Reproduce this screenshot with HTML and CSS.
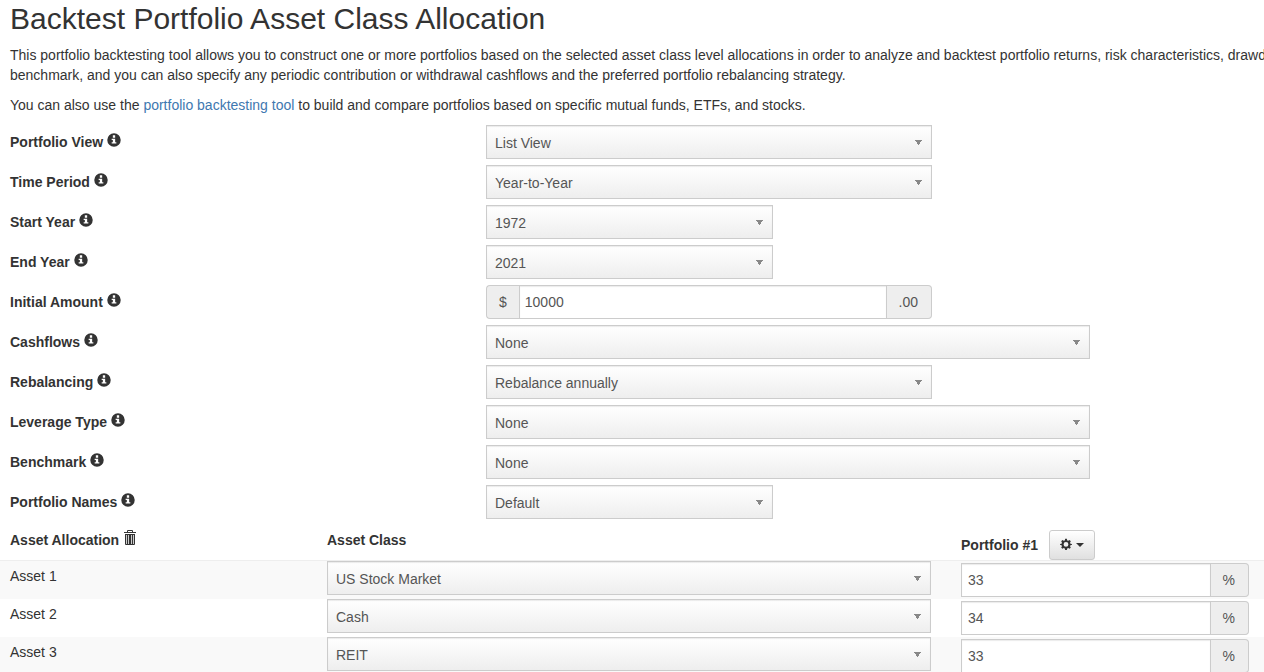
FILE: index.html
```html
<!DOCTYPE html>
<html lang="en">
<head>
<meta charset="utf-8">
<meta name="viewport" content="width=device-width, initial-scale=1">
<title>Backtest Portfolio Asset Class Allocation</title>
<link rel="stylesheet" href="styles.css">
</head>
<body>
<svg class="sprite" aria-hidden="true">
  <symbol id="info" viewBox="0 0 1200 1200">
    <path fill-rule="evenodd" d="M600 23a577 577 0 1 0 0 1154a577 577 0 1 0 0-1154zM500 200h200v200h-200zM400 500h300v300h100v100h-400v-100h100v-200h-100z"/>
  </symbol>
  <symbol id="trash" viewBox="0 0 14 16">
    <path fill-rule="evenodd" d="M4 2V1q0-1 1-1h4q1 0 1 1v1h3v1H1V2zM5 1v1h4V1zM2 4h10v10q0 1-1 1H3q-1 0-1-1z"/>
    <path class="slats" d="M3 5h1v9H3zM5 5h1v9H5zM8 5h1v9H8zM10 5h1v9h-1z"/>
  </symbol>
  <symbol id="gear" viewBox="0 0 14 14">
    <path fill-rule="evenodd" d="M6 1h2l.4 1.800 1.200.5L11.200 2.400l1.400 1.400-.9 1.600.5 1.200L14 7v1l-1.800.4-.5 1.200.9 1.600-1.400 1.400-1.600-.9-1.200.5L8 14H6l-.4-1.800-1.200-.5-1.600.9-1.400-1.400.9-1.600-.5-1.200L0 8V7l1.800-.4.5-1.200-.9-1.600L2.800 2.400l1.600.9 1.200-.5zM7 4.700a2.800 2.800 0 1 0 0 5.600a2.800 2.800 0 1 0 0-5.600z"/>
  </symbol>
</svg>
<main class="page">
  <h1 class="title">Backtest Portfolio Asset Class Allocation</h1>
  <p class="intro">This portfolio backtesting tool allows you to construct one or more portfolios based on the selected asset class level allocations in order to analyze and backtest portfolio returns, risk characteristics, drawd<br>benchmark, and you can also specify any periodic contribution or withdrawal cashflows and the preferred portfolio rebalancing strategy.</p>
  <p class="intro">You can also use the <a href="#">portfolio backtesting tool</a> to build and compare portfolios based on specific mutual funds, ETFs, and stocks.</p>
  <form>
    <div class="row"><label class="name" for="view">Portfolio View <svg class="icon"><use href="#info"/></svg></label><select class="select medium" id="view"><option>List View</option></select></div>
    <div class="row"><label class="name" for="period">Time Period <svg class="icon"><use href="#info"/></svg></label><select class="select medium" id="period"><option>Year-to-Year</option></select></div>
    <div class="row"><label class="name" for="start">Start Year <svg class="icon"><use href="#info"/></svg></label><select class="select" id="start"><option>1972</option></select></div>
    <div class="row"><label class="name" for="end">End Year <svg class="icon"><use href="#info"/></svg></label><select class="select" id="end"><option>2021</option></select></div>
    <div class="row"><label class="name" for="amount">Initial Amount <svg class="icon"><use href="#info"/></svg></label><div class="group medium"><span class="addon lead">$</span><input class="field" id="amount" type="text" value="10000"><span class="addon">.00</span></div></div>
    <div class="row"><label class="name" for="cash">Cashflows <svg class="icon"><use href="#info"/></svg></label><select class="select wide" id="cash"><option>None</option></select></div>
    <div class="row"><label class="name" for="rebalance">Rebalancing <svg class="icon"><use href="#info"/></svg></label><select class="select medium" id="rebalance"><option>Rebalance annually</option></select></div>
    <div class="row"><label class="name" for="leverage">Leverage Type <svg class="icon"><use href="#info"/></svg></label><select class="select wide" id="leverage"><option>None</option></select></div>
    <div class="row"><label class="name" for="benchmark">Benchmark <svg class="icon"><use href="#info"/></svg></label><select class="select wide" id="benchmark"><option>None</option></select></div>
    <div class="row"><label class="name" for="names">Portfolio Names <svg class="icon"><use href="#info"/></svg></label><select class="select" id="names"><option>Default</option></select></div>
    <table class="assets">
      <colgroup><col class="col-name"><col class="col-class"><col></colgroup>
      <thead>
        <tr><th>Asset Allocation <svg class="icon trash"><use href="#trash"/></svg></th><th>Asset Class</th><th><div class="portfolio">Portfolio #1 <button class="menu" type="button" aria-label="Portfolio actions"><svg class="gear"><use href="#gear"/></svg><span class="caret"></span></button></div></th></tr>
      </thead>
      <tbody>
        <tr><td><label for="class1">Asset 1</label></td><td><select class="select" id="class1"><option>US Stock Market</option></select></td><td><div class="group share"><input class="field" type="text" value="33" aria-label="Asset 1 allocation"><span class="addon">%</span></div></td></tr>
        <tr><td><label for="class2">Asset 2</label></td><td><select class="select" id="class2"><option>Cash</option></select></td><td><div class="group share"><input class="field" type="text" value="34" aria-label="Asset 2 allocation"><span class="addon">%</span></div></td></tr>
        <tr><td><label for="class3">Asset 3</label></td><td><select class="select" id="class3"><option>REIT</option></select></td><td><div class="group share"><input class="field" type="text" value="33" aria-label="Asset 3 allocation"><span class="addon">%</span></div></td></tr>
      </tbody>
    </table>
  </form>
</main>
</body>
</html>
```
FILE: styles.css
```css
* {
  box-sizing: border-box;
}

html {
  height: 100%;
  overflow: hidden;
}

body {
  margin: 0;
  color: #333;
  background: #fff;
  font: 14px/20px "Liberation Sans", Arial, sans-serif;
}

.sprite {
  display: none;
}

.page {
  padding-top: 2px;
  overflow: hidden;
}

.title {
  margin: 0 10px 10px;
  font-size: 30px;
  font-weight: 400;
  line-height: 33px;
}

.intro {
  margin: 0 0 10px 10px;
  white-space: nowrap;
}

a {
  color: #4078b0;
  text-decoration: none;
}

.row {
  display: grid;
  grid-template-columns: 476fr 287fr 159fr 158fr 174fr;
  align-items: start;
  margin: 0 0 6px 10px;
}

.name {
  padding-top: 7px;
  font-weight: 700;
}

.medium {
  grid-column: span 2;
}

.wide {
  grid-column: span 3;
}

.icon {
  width: 14px;
  height: 14px;
  fill: currentColor;
  vertical-align: 0;
}

.select {
  appearance: none;
  width: 100%;
  height: 34px;
  padding: 2px 24px 0 8px;
  border: 1px solid #ccc;
  border-radius: 0;
  color: #555;
  background:
    conic-gradient(from -36deg at 50% 100%, #888 72deg, transparent 0) right 9px top 14px / 7px 5px no-repeat,
    linear-gradient(#fff, #eee);
  box-shadow: inset 0 1px 1px rgba(0, 0, 0, 0.08);
  font: inherit;
}

.group {
  display: flex;
  height: 34px;
}

.field {
  flex: 1;
  min-width: 0;
  padding: 0 5px;
  border: 1px solid #ccc;
  color: #555;
  background: #fff;
  box-shadow: inset 0 1px 1px rgba(0, 0, 0, 0.08);
  font: inherit;
}

.addon {
  padding: 6px 13px 6px 12px;
  border: 1px solid #ccc;
  border-left: 0;
  border-radius: 0 4px 4px 0;
  color: #555;
  background: #eee;
}

.lead {
  padding: 6px 12px;
  border-left: 1px solid #ccc;
  border-right: 0;
  border-radius: 4px 0 0 4px;
}

.assets {
  width: 100%;
  table-layout: fixed;
  border-collapse: separate;
  border-spacing: 0;
}

.col-name {
  width: 25.87%;
}

.col-class {
  width: 50.16%;
}

.assets th {
  padding: 5px 0 0;
  border-bottom: 1px solid #eee;
  text-align: left;
  vertical-align: top;
}

.assets td {
  height: 38px;
  padding: 0 30px 0 0;
  vertical-align: top;
}

.assets th:first-child {
  padding-left: 10px;
}

.assets td:first-child {
  padding: 5px 0 0 10px;
}

.assets .share {
  margin-top: 2px;
}

.assets td:last-child {
  padding-right: 15px;
}

.assets tbody tr:nth-child(odd) {
  background: #f9f9f9;
}

.assets .select {
  display: block;
}

.share .field {
  padding-left: 6px;
}

.trash {
  height: 16px;
  vertical-align: -1px;
}

.slats {
  fill: #ccc;
}

.portfolio {
  display: flex;
  align-items: center;
  gap: 11px;
}

.menu {
  display: flex;
  align-items: center;
  gap: 4px;
  height: 30px;
  padding: 0 10px;
  border: 1px solid #ccc;
  border-radius: 3px;
  color: #333;
  background: linear-gradient(#fff, #e0e0e0);
}

.gear {
  width: 12px;
  height: 12px;
  margin-bottom: 3px;
  fill: currentColor;
}

.caret {
  border: 4px solid transparent;
  border-top-color: currentColor;
  border-bottom: 0;
}
```
